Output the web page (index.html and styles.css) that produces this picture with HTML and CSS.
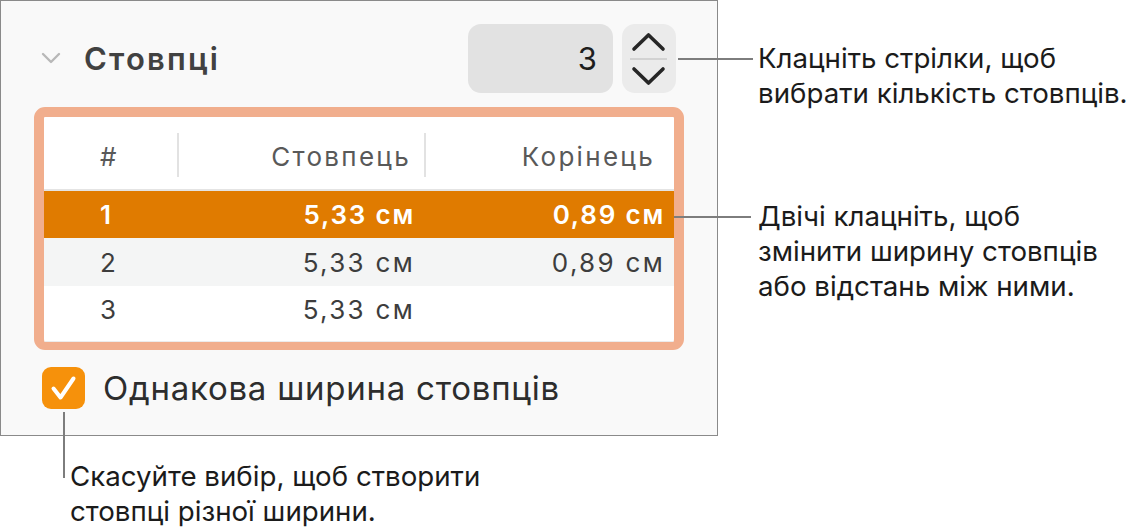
FILE: index.html
```html
<!DOCTYPE html>
<html lang="uk">

<head>
  <meta charset="UTF-8">
  <title>Стовпці</title>
  <link rel="stylesheet" href="styles.css">
</head>

<body>

  <div class="figure">
    <div class="top">
      <section class="panel">
        <div class="panel-head">
          <svg class="chevron" width="20" height="12" viewBox="0 0 20 12">
            <path d="M2 2 L10 10 L18 2" fill="none" stroke="#b8b8b8" stroke-width="2.4" stroke-linecap="round" stroke-linejoin="round"/>
          </svg>
          <h2 class="panel-title">Стовпці</h2>
          <div class="count-field">3</div>
          <div class="stepper">
            <svg width="54" height="69" viewBox="0 0 54 69">
              <path d="M12 25 L26.5 11 L41 25" fill="none" stroke="#262626" stroke-width="3.6" stroke-linecap="round" stroke-linejoin="round"/>
              <line x1="8" y1="35" x2="45" y2="35" stroke="#d2d2d2" stroke-width="2"/>
              <path d="M12 45 L26.5 59 L41 45" fill="none" stroke="#262626" stroke-width="3.6" stroke-linecap="round" stroke-linejoin="round"/>
            </svg>
          </div>
        </div>

        <div class="tabla-frame">
          <table class="tabla">
            <colgroup>
              <col class="col-num">
              <col class="col-width">
              <col class="col-gap">
            </colgroup>
            <thead>
              <tr>
                <th class="num">#</th>
                <th>Стовпець</th>
                <th>Корінець</th>
              </tr>
            </thead>
            <tbody>
              <tr class="selected">
                <td class="num">1</td>
                <td>5,33 см</td>
                <td>0,89 см</td>
              </tr>
              <tr class="alt">
                <td class="num">2</td>
                <td>5,33 см</td>
                <td>0,89 см</td>
              </tr>
              <tr>
                <td class="num">3</td>
                <td>5,33 см</td>
                <td></td>
              </tr>
            </tbody>
          </table>
        </div>

        <label class="check-row">
          <span class="checkbox">
            <svg width="43" height="42" viewBox="0 0 43 42">
              <path d="M11.5 21.5 L18.5 30.5 L31.5 11.5" fill="none" stroke="#fff" stroke-width="4" stroke-linecap="round" stroke-linejoin="round"/>
            </svg>
          </span>
          Однакова ширина стовпців
        </label>
      </section>

      <div class="notes">
        <p class="note note-arrows">Клацніть стрілки, щоб<br>вибрати кількість стовпців.</p>
        <p class="note note-width">Двічі клацніть, щоб<br>змінити ширину стовпців<br>або відстань між ними.</p>
      </div>
    </div>

    <p class="note note-check">Скасуйте вибір, щоб створити<br>стовпці різної ширини.</p>
  </div>

</body>

</html>
```

FILE: styles.css
```css
body {
  margin: 0;
  background: #fff;
  font-family: Inter, "Noto Sans", sans-serif;
}

.figure {
  width: 1133px;
  height: 529px;
  overflow: hidden;
}

.top {
  display: flex;
  align-items: flex-start;
}

/* panel */

.panel {
  box-sizing: border-box;
  width: 718px;
  height: 436px;
  border: 1px solid #8a8a8a;
  background: #f9f9f9;
  padding: 22px 41px 0 33px;
  flex-shrink: 0;
}

.panel-head {
  display: flex;
  align-items: center;
  height: 70px;
}

.chevron {
  margin-left: 7px;
  margin-right: 23px;
}

.panel-title {
  margin: 0;
  flex: 1;
  font-size: 31px;
  font-weight: 600;
  letter-spacing: 2.2px;
  color: #414141;
}

.count-field {
  box-sizing: border-box;
  width: 145px;
  height: 69px;
  border-radius: 13px;
  background: #e2e2e2;
  text-align: right;
  padding-right: 16px;
  font-size: 31px;
  line-height: 69px;
  color: #1e1e1e;
}

.stepper {
  width: 54px;
  height: 69px;
  margin-left: 9px;
  border-radius: 13px;
  background: #ebebeb;
}

.stepper svg {
  display: block;
}

/* tabla */

.tabla-frame {
  margin-top: 14px;
  border: 10px solid #f1ae8d;
  border-bottom-width: 8px;
  border-radius: 11px;
  background: #fff;
  width: 630px;
  height: 225px;
  overflow: hidden;
}

.tabla {
  width: 630px;
  border-collapse: collapse;
  table-layout: fixed;
  font-size: 26px;
  letter-spacing: 2.3px;
}

.col-num {
  width: 133px;
}

.col-width {
  width: 247px;
}

.col-gap {
  width: 250px;
}

.tabla th {
  position: relative;
  box-sizing: border-box;
  height: 73px;
  padding: 6px 13px 0 0;
  text-align: right;
  font-weight: normal;
  color: #595959;
  border-bottom: 2px solid #e4e4e4;
}

.tabla th:last-child {
  padding-right: 19px;
}

.tabla th + th::before {
  content: "";
  position: absolute;
  left: 0;
  top: 16px;
  width: 2px;
  height: 44px;
  background: #e2e2e2;
}

.tabla th.num,
.tabla td.num {
  text-align: left;
  padding-left: 56px;
}

.tabla td {
  box-sizing: border-box;
  height: 48px;
  padding: 0 9px 0 0;
  text-align: right;
  color: #3d3d3d;
}

.tabla tr.selected td {
  background: #e07b00;
  color: #fff;
  font-weight: 600;
  letter-spacing: 1.8px;
}

.tabla tr.alt td {
  background: #f4f5f5;
}

.tabla tbody tr:last-child td {
  height: 56px;
  padding-bottom: 8px;
  border-bottom: 2px solid #ececec;
}

/* checkbox */

.check-row {
  display: flex;
  align-items: center;
  margin-top: 17px;
  margin-left: 8px;
  font-size: 33px;
  letter-spacing: 0.75px;
  color: #2d2d2d;
}

.checkbox {
  width: 43px;
  height: 42px;
  border-radius: 9px;
  background: #f6910b;
  margin-right: 18px;
}

.checkbox svg {
  display: block;
}

/* notes */

.notes {
  padding-left: 40px;
}

.note {
  position: relative;
  margin: 0;
  font-size: 27.7px;
  line-height: 35px;
  color: #1b1b1b;
}

.note::before {
  content: "";
  position: absolute;
  background: #7d7d7d;
}

.note-arrows {
  margin-top: 41px;
}

.note-arrows::before {
  left: -80px;
  top: 17px;
  width: 75px;
  height: 2px;
}

.note-width {
  margin-top: 88px;
}

.note-width::before {
  left: -84px;
  top: 17px;
  width: 77px;
  height: 2px;
}

.note-check {
  margin: 23px 0 0 70px;
}

.note-check::before {
  left: -7px;
  top: -47px;
  width: 2px;
  height: 66px;
}
```
